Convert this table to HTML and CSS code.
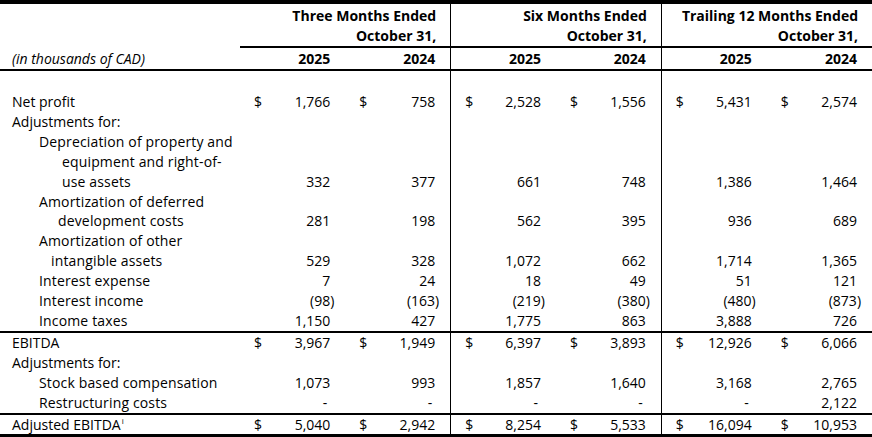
FILE: index.html
```html
<!DOCTYPE html>
<html>
<head>
<meta charset="utf-8">
<link rel="stylesheet" href="styles.css">
</head>
<body>
<table class="fin">
  <colgroup>
    <col class="c-label">
    <col class="c-val"><col class="c-val">
    <col class="c-val"><col class="c-val">
    <col class="c-val"><col class="c-val">
  </colgroup>
  <thead>
    <tr class="h1">
      <th></th>
      <th colspan="2" class="hd">Three Months Ended</th>
      <th colspan="2" class="hd g">Six Months Ended</th>
      <th colspan="2" class="hd g">Trailing 12 Months Ended</th>
    </tr>
    <tr class="h2">
      <th></th>
      <th colspan="2" class="hd ul">October 31,</th>
      <th colspan="2" class="hd ul g">October 31,</th>
      <th colspan="2" class="hd ul g">October 31,</th>
    </tr>
    <tr class="h3">
      <th class="units">(in thousands of CAD)</th>
      <th class="yr">2025</th><th class="yr">2024</th>
      <th class="yr g">2025</th><th class="yr">2024</th>
      <th class="yr g">2025</th><th class="yr">2024</th>
    </tr>
  </thead>
  <tbody>
    <tr class="spacer"><td></td><td></td><td></td><td class="g"></td><td></td><td class="g"></td><td></td></tr>
    <tr>
      <td class="lbl">Net profit</td>
      <td><div class="v"><span>$</span><span>1,766</span></div></td>
      <td><div class="v"><span>$</span><span>758</span></div></td>
      <td class="g"><div class="v"><span>$</span><span>2,528</span></div></td>
      <td><div class="v"><span>$</span><span>1,556</span></div></td>
      <td class="g"><div class="v"><span>$</span><span>5,431</span></div></td>
      <td><div class="v"><span>$</span><span>2,574</span></div></td>
    </tr>
    <tr>
      <td class="lbl">Adjustments for:</td>
      <td></td><td></td><td class="g"></td><td></td><td class="g"></td><td></td>
    </tr>
    <tr>
      <td class="lbl in1"><div class="wrap w1">Depreciation of property and <span class="cont">equipment and right-of-</span><span class="cont">use assets</span></div></td>
      <td><div class="v"><span></span><span>332</span></div></td>
      <td><div class="v"><span></span><span>377</span></div></td>
      <td class="g"><div class="v"><span></span><span>661</span></div></td>
      <td><div class="v"><span></span><span>748</span></div></td>
      <td class="g"><div class="v"><span></span><span>1,386</span></div></td>
      <td><div class="v"><span></span><span>1,464</span></div></td>
    </tr>
    <tr>
      <td class="lbl in1"><div class="wrap w2">Amortization of deferred <span class="cont">development costs</span></div></td>
      <td><div class="v"><span></span><span>281</span></div></td>
      <td><div class="v"><span></span><span>198</span></div></td>
      <td class="g"><div class="v"><span></span><span>562</span></div></td>
      <td><div class="v"><span></span><span>395</span></div></td>
      <td class="g"><div class="v"><span></span><span>936</span></div></td>
      <td><div class="v"><span></span><span>689</span></div></td>
    </tr>
    <tr>
      <td class="lbl in1"><div class="wrap w3">Amortization of other <span class="cont">intangible assets</span></div></td>
      <td><div class="v"><span></span><span>529</span></div></td>
      <td><div class="v"><span></span><span>328</span></div></td>
      <td class="g"><div class="v"><span></span><span>1,072</span></div></td>
      <td><div class="v"><span></span><span>662</span></div></td>
      <td class="g"><div class="v"><span></span><span>1,714</span></div></td>
      <td><div class="v"><span></span><span>1,365</span></div></td>
    </tr>
    <tr>
      <td class="lbl in1">Interest expense</td>
      <td><div class="v"><span></span><span>7</span></div></td>
      <td><div class="v"><span></span><span>24</span></div></td>
      <td class="g"><div class="v"><span></span><span>18</span></div></td>
      <td><div class="v"><span></span><span>49</span></div></td>
      <td class="g"><div class="v"><span></span><span>51</span></div></td>
      <td><div class="v"><span></span><span>121</span></div></td>
    </tr>
    <tr>
      <td class="lbl in1">Interest income</td>
      <td><div class="v"><span></span><span class="neg">(98)</span></div></td>
      <td><div class="v"><span></span><span class="neg">(163)</span></div></td>
      <td class="g"><div class="v"><span></span><span class="neg">(219)</span></div></td>
      <td><div class="v"><span></span><span class="neg">(380)</span></div></td>
      <td class="g"><div class="v"><span></span><span class="neg">(480)</span></div></td>
      <td><div class="v"><span></span><span class="neg">(873)</span></div></td>
    </tr>
    <tr class="total-above">
      <td class="lbl in1">Income taxes</td>
      <td><div class="v"><span></span><span>1,150</span></div></td>
      <td><div class="v"><span></span><span>427</span></div></td>
      <td class="g"><div class="v"><span></span><span>1,775</span></div></td>
      <td><div class="v"><span></span><span>863</span></div></td>
      <td class="g"><div class="v"><span></span><span>3,888</span></div></td>
      <td><div class="v"><span></span><span>726</span></div></td>
    </tr>
    <tr>
      <td class="lbl">EBITDA</td>
      <td><div class="v"><span>$</span><span>3,967</span></div></td>
      <td><div class="v"><span>$</span><span>1,949</span></div></td>
      <td class="g"><div class="v"><span>$</span><span>6,397</span></div></td>
      <td><div class="v"><span>$</span><span>3,893</span></div></td>
      <td class="g"><div class="v"><span>$</span><span>12,926</span></div></td>
      <td><div class="v"><span>$</span><span>6,066</span></div></td>
    </tr>
    <tr>
      <td class="lbl">Adjustments for:</td>
      <td></td><td></td><td class="g"></td><td></td><td class="g"></td><td></td>
    </tr>
    <tr>
      <td class="lbl in1">Stock based compensation</td>
      <td><div class="v"><span></span><span>1,073</span></div></td>
      <td><div class="v"><span></span><span>993</span></div></td>
      <td class="g"><div class="v"><span></span><span>1,857</span></div></td>
      <td><div class="v"><span></span><span>1,640</span></div></td>
      <td class="g"><div class="v"><span></span><span>3,168</span></div></td>
      <td><div class="v"><span></span><span>2,765</span></div></td>
    </tr>
    <tr class="total-above">
      <td class="lbl in1">Restructuring costs</td>
      <td><div class="v"><span></span><span class="dash">-</span></div></td>
      <td><div class="v"><span></span><span class="dash">-</span></div></td>
      <td class="g"><div class="v"><span></span><span class="dash">-</span></div></td>
      <td><div class="v"><span></span><span class="dash">-</span></div></td>
      <td class="g"><div class="v"><span></span><span class="dash">-</span></div></td>
      <td><div class="v"><span></span><span>2,122</span></div></td>
    </tr>
    <tr class="last">
      <td class="lbl">Adjusted EBITDA<sup class="note">i</sup></td>
      <td><div class="v"><span>$</span><span>5,040</span></div></td>
      <td><div class="v"><span>$</span><span>2,942</span></div></td>
      <td class="g"><div class="v"><span>$</span><span>8,254</span></div></td>
      <td><div class="v"><span>$</span><span>5,533</span></div></td>
      <td class="g"><div class="v"><span>$</span><span>16,094</span></div></td>
      <td><div class="v"><span>$</span><span>10,953</span></div></td>
    </tr>
  </tbody>
</table>
</body>
</html>
```

FILE: styles.css
```css
html, body {
  margin: 0;
  padding: 0;
  background: #fff;
}

body {
  font-family: "Open Sans", "Noto Sans", "Liberation Sans", sans-serif;
  font-size: 14px;
  color: #000;
}

.fin {
  width: 872px;
  table-layout: fixed;
  border-collapse: collapse;
  border-top: 4px solid #000;
}

.c-label { width: 240px; }
.c-val { width: 105.33px; }

.fin th,
.fin td {
  padding: 0;
  line-height: 19.9px;
  vertical-align: bottom;
  font-weight: normal;
  text-align: left;
}

.fin .g {
  border-left: 1px solid #000;
}

.h1 th {
  padding-top: 2px;
  height: 20px;
}

.h2 th {
  height: 20px;
}

.hd {
  font-weight: bold !important;
  text-align: right !important;
  padding-right: 14px !important;
  white-space: nowrap;
}

.hd.ul {
  border-bottom: 2px solid #000;
}

.h3 th {
  border-bottom: 2px solid #000;
  height: 21px;
}

.units {
  font-style: italic;
  padding-left: 12px !important;
}

.yr {
  font-weight: bold !important;
  text-align: right !important;
  padding-right: 15px !important;
}

.spacer td {
  height: 21px;
}

.lbl {
  padding-left: 12px !important;
  white-space: nowrap;
}

.lbl.in1 {
  padding-left: 39px !important;
}

.lbl.in1 {
  letter-spacing: 0.15px;
}

.wrap {
  display: flex;
  flex-direction: column;
}

.wrap .cont {
  display: block;
}

.w1 .cont { padding-left: 23px; }
.w2 .cont { padding-left: 19px; }
.w3 .cont { padding-left: 12px; }

.v {
  display: flex;
  justify-content: space-between;
  padding-left: 14px;
  padding-right: 15px;
}

.neg {
  margin-right: -4px;
}

.dash {
  margin-right: 3px;
}

.total-above td {
  border-bottom: 2px solid #000;
}

.last td {
  border-bottom: 5px solid #000;
}

.note {
  font-size: 8px;
  line-height: 0;
  vertical-align: 6px;
  margin-left: 1px;
}
```
